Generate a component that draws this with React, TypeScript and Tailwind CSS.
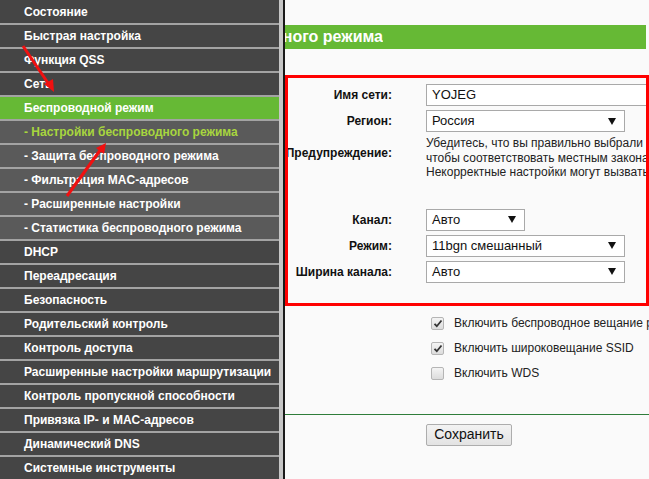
import React from "react";

const menu: { t: string; kind: "main" | "active" | "sub" | "subActive" }[] = [
  { t: "Состояние", kind: "main" },
  { t: "Быстрая настройка", kind: "main" },
  { t: "Функция QSS", kind: "main" },
  { t: "Сеть", kind: "main" },
  { t: "Беспроводной режим", kind: "active" },
  { t: "- Настройки беспроводного режима", kind: "subActive" },
  { t: "- Защита беспроводного режима", kind: "sub" },
  { t: "- Фильтрация MAC-адресов", kind: "sub" },
  { t: "- Расширенные настройки", kind: "sub" },
  { t: "- Статистика беспроводного режима", kind: "sub" },
  { t: "DHCP", kind: "main" },
  { t: "Переадресация", kind: "main" },
  { t: "Безопасность", kind: "main" },
  { t: "Родительский контроль", kind: "main" },
  { t: "Контроль доступа", kind: "main" },
  { t: "Расширенные настройки маршрутизации", kind: "main" },
  { t: "Контроль пропускной способности", kind: "main" },
  { t: "Привязка IP- и MAC-адресов", kind: "main" },
  { t: "Динамический DNS", kind: "main" },
  { t: "Системные инструменты", kind: "main" },
];

function rowClass(kind: string) {
  switch (kind) {
    case "active":
      return "bg-[#66b935] text-white";
    case "subActive":
      return "bg-[#5a5a5a] text-[#a8d63e]";
    case "sub":
      return "bg-[#5a5a5a] text-white";
    default:
      return "bg-[#454545] text-white";
  }
}

function Arrow() {
  return (
    <svg width="8" height="7" viewBox="0 0 8 7">
      <polygon points="0,0 8,0 4,7" fill="#111" />
    </svg>
  );
}

function Select({ value, w }: { value: string; w: string }) {
  return (
    <div
      className={`${w} h-[22px] border border-[#a9a9a9] bg-white flex items-center justify-between pl-[5px] pr-[8px] text-[13px] text-[#111]`}
    >
      <span>{value}</span>
      <Arrow />
    </div>
  );
}

function Label({ children, extra = "" }: { children: React.ReactNode; extra?: string }) {
  return (
    <div className={`w-[107px] shrink-0 text-right text-[12px] font-bold text-[#111] whitespace-nowrap ${extra}`}>
      {children}
    </div>
  );
}

function Check({ checked, label }: { checked: boolean; label: string }) {
  return (
    <div className="flex items-center h-[25px] pl-[146px] whitespace-nowrap">
      <div className="w-[13px] h-[13px] shrink-0 rounded-[2px] border border-[#b5b5b5] bg-gradient-to-b from-[#f4f4f4] to-[#dcdcdc] flex items-center justify-center">
        {checked && (
          <svg width="10" height="9" viewBox="0 0 10 9">
            <path d="M1.5 4.8 L3.8 7.2 L8.5 1.5" fill="none" stroke="#333" strokeWidth="1.8" />
          </svg>
        )}
      </div>
      <span className="ml-[10px] text-[12px] text-[#222]">{label}</span>
    </div>
  );
}

export default function App() {
  return (
    <div className="relative w-[649px] h-[479px] overflow-hidden flex font-['Liberation_Sans',Arial,sans-serif]">
      {/* Sidebar */}
      <div className="w-[279px] shrink-0 bg-[#a3a3a3] flex flex-col gap-[2px]">
        {menu.map((m, i) => (
          <div
            key={i}
            className={`${rowClass(m.kind)} ${i === 0 ? "h-[23px]" : "h-[22px]"} shrink-0 flex items-center pl-[24px] text-[12px] font-bold whitespace-nowrap`}
          >
            {m.t}
          </div>
        ))}
      </div>
      <div className="w-[4px] shrink-0 bg-[#c6c6c6]" />
      <div className="w-[2px] shrink-0 bg-[#1a1a1a]" />

      {/* Content */}
      <div className="flex-1 bg-[#fafafa] min-w-0 flex flex-col">
        <div className="h-[25px]" />
        <div className="h-[24px] w-[361px] bg-[#66b935] flex items-center">
          <div className="w-[98px] overflow-hidden flex justify-end">
            <span className="whitespace-nowrap text-white font-bold text-[16px]">
              Настройки беспроводного режима
            </span>
          </div>
        </div>

        <div className="h-[35px]" />
        {/* Имя сети */}
        <div className="flex items-center h-[22px]">
          <Label>Имя сети:</Label>
          <div className="ml-[34px] w-[260px] shrink-0 h-[22px] border border-[#a9a9a9] bg-white flex items-center pl-[5px] text-[13px] text-[#111]">
            YOJEG
          </div>
        </div>
        {/* Регион */}
        <div className="flex items-center h-[22px] mt-[4px]">
          <Label>Регион:</Label>
          <div className="ml-[34px] shrink-0">
            <Select value="Россия" w="w-[199px]" />
          </div>
        </div>
        {/* Предупреждение */}
        <div className="flex mt-[4px]">
          <Label extra="pt-[8px]">Предупреждение:</Label>
          <div className="ml-[34px] shrink-0 text-[12px] leading-[14.5px] text-[#222] whitespace-nowrap">
            <div>Убедитесь, что вы правильно выбрали страну,</div>
            <div>чтобы соответствовать местным законам.</div>
            <div>Некорректные настройки могут вызвать помехи.</div>
          </div>
        </div>
        <div className="h-[29px]" />
        {/* Канал */}
        <div className="flex items-center h-[22px]">
          <Label>Канал:</Label>
          <div className="ml-[34px] shrink-0">
            <Select value="Авто" w="w-[99px]" />
          </div>
        </div>
        <div className="flex items-center h-[22px] mt-[4px]">
          <Label>Режим:</Label>
          <div className="ml-[34px] shrink-0">
            <Select value="11bgn смешанный" w="w-[199px]" />
          </div>
        </div>
        <div className="flex items-center h-[22px] mt-[4px]">
          <Label>Ширина канала:</Label>
          <div className="ml-[34px] shrink-0">
            <Select value="Авто" w="w-[199px]" />
          </div>
        </div>

        <div className="h-[28px]" />
        <Check checked label="Включить беспроводное вещание роутера" />
        <Check checked label="Включить широковещание SSID" />
        <Check checked={false} label="Включить WDS" />

        <div className="h-[28px]" />
        <div className="h-[1px] bg-[#2f7d3a]" />
        <div className="pl-[141px] mt-[9px]">
          <button className="w-[86px] h-[22px] border border-[#adadad] rounded-[2px] bg-gradient-to-b from-[#f3f3f3] to-[#e3e3e3] text-[14px] text-[#111] flex items-center justify-center">
            Сохранить
          </button>
        </div>
      </div>

      {/* Red annotation box */}
      <div className="absolute left-[285px] top-[75px] w-[364px] h-[231px] border-[3px] border-[#ff0000] pointer-events-none" />

      {/* Red arrows */}
      <svg className="absolute left-0 top-0 pointer-events-none" width="649" height="479">
        <line x1="23" y1="46" x2="50" y2="86" stroke="#f01010" strokeWidth="3" />
        <polygon points="54,92 44,84 53,79" fill="#f01010" />
        <line x1="67" y1="196" x2="101" y2="149" stroke="#f01010" strokeWidth="3" />
        <polygon points="106,143 104,154 96,148" fill="#f01010" />
      </svg>
    </div>
  );
}
